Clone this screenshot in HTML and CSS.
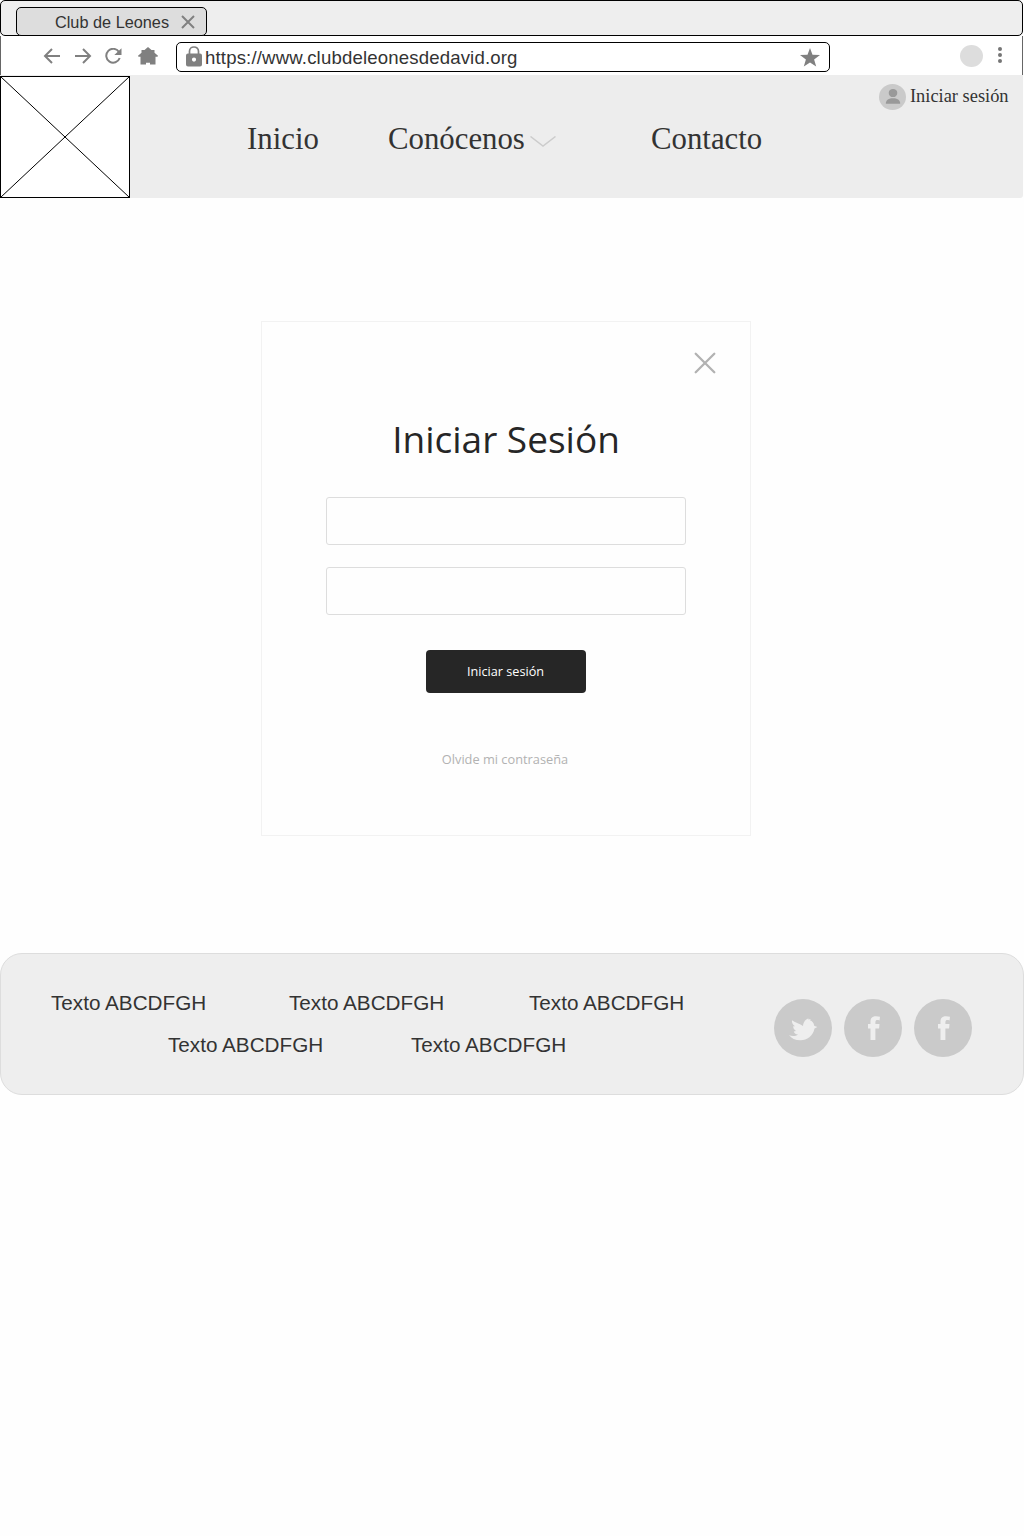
FILE: index.html
```html
<!DOCTYPE html>
<html lang="es">
<head>
<meta charset="utf-8">
<title>Club de Leones</title>
<link rel="stylesheet" href="styles.css">
</head>
<body>
<div class="tabstrip">
  <div class="tab">
    <span class="tab-title">Club de Leones</span>
    <svg class="tab-close" width="14" height="14" viewBox="0 0 14 14"><path d="M1 1L13 13M13 1L1 13"/></svg>
  </div>
</div>
<div class="toolbar">
  <div class="tools">
    <svg width="18" height="16" viewBox="0 0 18 16"><path class="line" d="M17 8H2.500M9 1L2 8L9 15"/></svg>
    <svg width="18" height="16" viewBox="0 0 18 16"><path class="line" d="M1 8H15.500M9 1L16 8L9 15"/></svg>
    <svg width="18" height="16" viewBox="0 0 18 16"><path class="line" d="M14 4A6.900 6.900 0 1 0 14.700 10"/><path class="solid" d="M16.500 .3V7H9.300Z"/></svg>
    <svg class="home" width="20" height="18" viewBox="0 0 20 18"><path class="solid" d="M10 0L13.500 3H16.500V5.800L20 8.800L19.500 9.800H17.500V17.500H12V15.800H8V17.500H2.500V9.800H.5L0 8.800L3.500 5.800V3H6.500Z"/></svg>
  </div>
  <div class="address">
    <svg class="lock" width="16" height="21" viewBox="0 0 16 21"><path class="lock-arc" d="M3.500 8V5.200a4.500 4.200 0 0 1 9 0V8"/><path class="solid" fill-rule="evenodd" d="M2 7.500H14A2 2 0 0 1 16 9.500V18.500A2 2 0 0 1 14 20.500H2A2 2 0 0 1 0 18.500V9.500A2 2 0 0 1 2 7.500ZM8 11.500A2.100 2.100 0 1 0 8 15.700A2.100 2.100 0 0 0 8 11.500Z"/></svg>
    <span class="url">https://www.clubdeleonesdedavid.org</span>
    <svg width="20" height="19" viewBox="0 0 20 19"><path class="solid" d="M10 0L12.500 6.700L20 7L14.100 11.600L16.200 18.500L10 14.500L3.800 18.500L5.900 11.600L0 7L7.500 6.700Z"/></svg>
  </div>
  <span class="profile"></span>
  <svg class="dots" width="4" height="16" viewBox="0 0 4 16"><circle cx="2" cy="2" r="2"/><circle cx="2" cy="8" r="2"/><circle cx="2" cy="14" r="2"/></svg>
</div>
<header class="header">
  <svg class="logo" width="130" height="122" viewBox="0 0 130 122"><rect x=".5" y=".5" width="129" height="121"/><path d="M.5 .5L129.500 121.500M129.500 .5L.5 121.500"/></svg>
  <nav class="nav">
    <a class="nav-home">Inicio</a>
    <a class="nav-about">Conócenos</a>
    <svg width="26" height="11" viewBox="0 0 26 11"><path d="M.5 .5L13 10L25.500 .5"/></svg>
    <a class="nav-contact">Contacto</a>
  </nav>
  <a class="account">
    <svg width="27" height="26" viewBox="0 0 27 26"><ellipse cx="13.500" cy="13" rx="13.500" ry="13" fill="#cacaca"/><ellipse cx="14" cy="9" rx="4.300" ry="4.100" fill="#999"/><path d="M6.800 19.800C6.800 15.500 10 14.200 14 14.200S21.200 15.500 21.200 19.800Z" fill="#999"/></svg>
    <span>Iniciar sesión</span>
  </a>
</header>
<main class="main">
  <form class="card">
    <svg class="card-close" width="22" height="22" viewBox="0 0 22 22"><path d="M1.700 1.700L20.300 20.300M20.300 1.700L1.700 20.300"/></svg>
    <h1 class="title">Iniciar Sesión</h1>
    <input class="field" type="text" aria-label="Usuario">
    <input class="field" type="password" aria-label="Contraseña">
    <button class="submit" type="button">Iniciar sesión</button>
    <a class="forgot">Olvide mi contraseña</a>
  </form>
</main>
<footer class="footer">
  <div class="links">
    <div class="row row-top"><span>Texto ABCDFGH</span><span>Texto ABCDFGH</span><span>Texto ABCDFGH</span></div>
    <div class="row row-bottom"><span>Texto ABCDFGH</span><span>Texto ABCDFGH</span></div>
  </div>
  <div class="social">
    <svg width="58" height="58" viewBox="0 0 58 58"><circle cx="29" cy="29" r="29"/><path d="M15 36C17.500 37.500 21.500 37.500 24 35.500C21.500 35.300 20 34 19.800 32.500L22 32C19.800 30.500 19.200 29 19.200 27.300L21 27.300C18.800 25.500 17.500 23.200 18 21.200C21 23.800 25 24.200 29 27C29.300 23 32 19.700 34.500 19.500L34.300 20.500L36.700 20L36 21.300C38 21.800 40 24 40.200 26.800L43.300 28L40.500 29.500C39 37 33 41.300 26.500 41.300C21 41.300 17.500 39.500 15 36Z"/></svg>
    <svg width="58" height="58" viewBox="0 0 58 58"><circle cx="29" cy="29" r="29"/><path d="M26.500 41V29.400H24V24.900H26.500V22.500C26.500 18.500 28.800 17.200 32 17.200Q34.200 17.200 36 17.700L35.500 21.400C33 20.700 31.400 21 31.400 23.200V24.900H35.500L35.100 29.400H31.400V41Z"/></svg>
    <svg width="58" height="58" viewBox="0 0 58 58"><circle cx="29" cy="29" r="29"/><path d="M26.500 41V29.400H24V24.900H26.500V22.500C26.500 18.500 28.800 17.200 32 17.200Q34.200 17.200 36 17.700L35.500 21.400C33 20.700 31.400 21 31.400 23.200V24.900H35.500L35.100 29.400H31.400V41Z"/></svg>
  </div>
</footer>
</body>
</html>
```
FILE: styles.css
```css
* { box-sizing: border-box; }
body { margin: 0; min-height: 1536px; background: #fefefe; color: #333; font-family: "Liberation Sans", Arial, sans-serif; }
svg { display: block; flex: none; }

.tabstrip { width: 1023px; height: 36px; padding: 6px 15px 0; background: #eee; border: 1px solid #000; border-radius: 5px; }
.tab { width: 191px; height: 29px; display: flex; align-items: center; padding-left: 38px; background: #ddd; border: 1px solid #000; border-radius: 5px; }
.tab-title { width: 126px; padding-top: 1px; font-size: 16.3px; white-space: nowrap; }
.tab-close { margin-top: 1px; fill: none; stroke: #808080; stroke-width: 2; }

.toolbar { width: 1023px; height: 39px; display: flex; align-items: center; padding-left: 42px; background: #fff; border: solid #666; border-width: 0 1px; }
.tools { width: 133px; display: flex; align-items: center; gap: 13px; padding-top: 1px; }
.home { margin-left: 2px; }
.line { fill: none; stroke: #808080; stroke-width: 2; }
.solid { fill: #808080; }
.lock-arc { fill: none; stroke: #808080; stroke-width: 1.7; }
.lock { margin-top: -2px; }
.address { width: 654px; height: 30px; display: flex; align-items: center; margin-top: 3px; padding: 0 9px; border: 1px solid #000; border-radius: 5px; }
.url { flex: 1; padding: 2px 0 0 3px; font-size: 18.6px; letter-spacing: .16px; line-height: 24px; white-space: nowrap; }
.profile { width: 23px; height: 22px; margin-left: 130px; border-radius: 50%; background: #ddd; }
.dots { margin-left: 15px; margin-top: -2px; fill: #757575; }

.header { width: 1023px; height: 123px; display: flex; padding-top: 1px; background: #ededed; border-radius: 0 0 3px 3px; }
.logo { fill: #fff; stroke: #000; stroke-width: 1; }
.nav { width: 749px; height: 126px; display: flex; align-items: center; padding-left: 117px; font: 30.8px "Liberation Serif", "Times New Roman", serif; white-space: nowrap; }
.nav svg { margin-top: 5px; fill: none; stroke: #ccc; stroke-width: 1.5; }
.nav-home { width: 141px; }
.nav-about { width: 142px; }
.nav-contact { margin-left: 95px; }
.account { height: 26px; display: flex; align-items: center; gap: 4px; margin-top: 8px; font: 18.4px "Liberation Serif", "Times New Roman", serif; white-space: nowrap; }
.account span { padding-bottom: 2px; }

.main { height: 755px; padding: 123px 0 0 261px; }
.card { width: 490px; height: 515px; display: flex; flex-direction: column; align-items: center; padding-top: 30px; background: #fefefe; border: 1px solid #f2f2f2; font-family: "Open Sans", sans-serif; }
.card-close { align-self: flex-end; margin-right: 34px; fill: none; stroke: #b2b2b2; stroke-width: 2.3; stroke-linecap: round; }
.title { height: 54px; margin: 38px 0 31px; font-size: 37px; font-weight: 400; line-height: 54px; color: #262626; }
.field { width: 360px; height: 48px; margin-bottom: 22px; padding: 0 12px; border: 1px solid #ddd; border-radius: 3px; background: #fefefe; font: inherit; }
.submit { width: 160px; height: 43px; margin-top: 13px; padding: 0 1px 2px 0; border: 0; border-radius: 4px; background: #262626; color: #fff; font: 12.7px "Open Sans", sans-serif; }
.forgot { margin: 57px 2px 0 0; font-size: 12.8px; line-height: 18px; color: #b2b2b2; }

.footer { height: 142px; display: flex; background: #eee; border: 1px solid #ddd; border-radius: 22px; }
.links { width: 773px; padding: 28px 0 0 50px; font-size: 20.7px; line-height: 42px; white-space: nowrap; }
.row { display: grid; }
.row-top { grid-template-columns: 238px 240px auto; }
.row-bottom { grid-template-columns: 243px auto; padding-left: 117px; }
.social { display: flex; gap: 12px; padding-top: 45px; }
.social circle { fill: #cacaca; }
.social path { fill: #eee; }
```
